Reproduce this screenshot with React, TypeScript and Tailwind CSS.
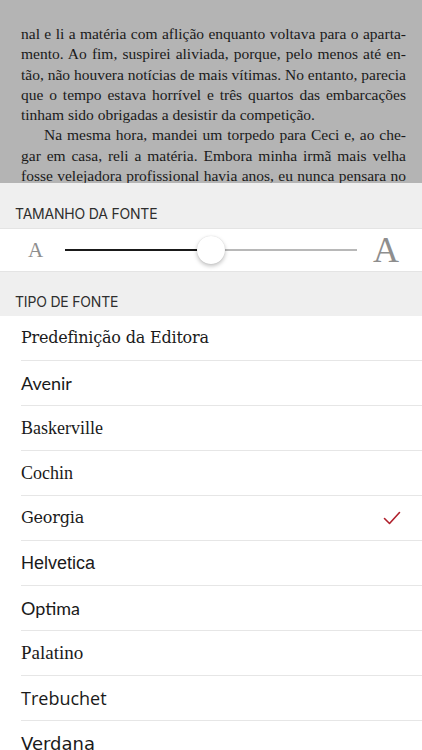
const bookLines = [
  { text: 'nal e li a matéria com aflição enquanto voltava para o aparta-', justify: true },
  { text: 'mento. Ao fim, suspirei aliviada, porque, pelo menos até en-', justify: true },
  { text: 'tão, não houvera notícias de mais vítimas. No entanto, parecia', justify: true },
  { text: 'que o tempo estava horrível e três quartos das embarcações', justify: true },
  { text: 'tinham sido obrigadas a desistir da competição.', justify: false },
  { text: 'Na mesma hora, mandei um torpedo para Ceci e, ao che-', justify: true, indent: true },
  { text: 'gar em casa, reli a matéria. Embora minha irmã mais velha', justify: true },
  { text: 'fosse velejadora profissional havia anos, eu nunca pensara no', justify: true },
];

const fonts = [
  { name: 'Predefinição da Editora', family: "font-['DejaVu_Serif',serif] text-[16px] tracking-[-0.2px]" },
  { name: 'Avenir', family: "font-['Lato',sans-serif] text-[18px]" },
  { name: 'Baskerville', family: "font-['Liberation_Serif',serif] text-[18px]" },
  { name: 'Cochin', family: "font-['Liberation_Serif',serif] text-[18px]" },
  { name: 'Georgia', family: "font-['DejaVu_Serif',serif] text-[16px] tracking-[-0.2px]", selected: true },
  { name: 'Helvetica', family: "font-['Liberation_Sans',sans-serif] text-[18px]" },
  { name: 'Optima', family: "font-['Lato',sans-serif] text-[18px]" },
  { name: 'Palatino', family: "font-['Liberation_Serif',serif] text-[19px]" },
  { name: 'Trebuchet', family: "font-['Open_Sans',sans-serif] text-[18px]" },
  { name: 'Verdana', family: "font-['DejaVu_Sans',sans-serif] text-[18px]" },
];

function CheckMark() {
  return (
    <svg width="18" height="14" viewBox="0 0 18 14" fill="none">
      <path d="M1.5 7.5 L6.5 12.5 L16.5 1.5" stroke="#b0202c" strokeWidth="1.6" strokeLinecap="round" strokeLinejoin="round" />
    </svg>
  );
}

export default function App() {
  return (
    <div className="w-[422px] h-[750px] overflow-hidden bg-white font-['Inter',sans-serif]">
      {/* Book page behind the sheet */}
      <div className="h-[183px] overflow-hidden bg-[#b4b4b4] pt-[24px] pl-[21px] pr-[16px] font-['Liberation_Serif',serif] text-[15.5px] leading-[20.3px] text-[#1a1a1a]">
        {bookLines.map((line, i) => (
          <div
            key={i}
            className={
              (line.justify ? 'text-justify [text-align-last:justify] ' : '') +
              (line.indent ? 'pl-[23px] ' : '') +
              'whitespace-nowrap'
            }
          >
            {line.text}
          </div>
        ))}
      </div>

      {/* Settings sheet */}
      <div className="bg-[#efefef]">
        <div className="h-[45px] flex items-end pb-[4px] pl-[15px] text-[14px] text-[#2e2e2e] tracking-[-0.2px]">
          TAMANHO DA FONTE
        </div>
        <div className="h-[44px] bg-white border-y border-[#e4e4e4] flex items-center">
          <span className="w-[65px] pl-[28px] font-['Liberation_Serif',serif] text-[21px] text-[#8e8e8e] leading-none">A</span>
          <div className="relative w-[292px] h-[28px] flex items-center">
            <div className="h-[2px] w-[146px] bg-[#1a1a1a]" />
            <div className="h-[2px] flex-1 bg-[#b8b8b8]" />
            <div className="absolute left-[132px] top-0 w-[28px] h-[28px] rounded-full bg-white shadow-[0_2px_4px_rgba(0,0,0,0.25),0_0_1px_rgba(0,0,0,0.15)]" />
          </div>
          <span className="pl-[16px] font-['Liberation_Serif',serif] text-[36px] text-[#8e8e8e] leading-none">A</span>
        </div>
        <div className="h-[44px] flex items-end pb-[4px] pl-[15px] text-[14px] text-[#2e2e2e] tracking-[-0.2px]">
          TIPO DE FONTE
        </div>
      </div>

      {/* Font list */}
      <div className="bg-white">
        {fonts.map((f) => (
          <div key={f.name} className="pl-[21px]">
            <div className="h-[45px] flex items-center justify-between pr-[21px] border-b border-[#e6e6e6]">
              <span className={f.family + ' text-[#1a1a1a]'}>{f.name}</span>
              {f.selected && <CheckMark />}
            </div>
          </div>
        ))}
      </div>
    </div>
  );
}
